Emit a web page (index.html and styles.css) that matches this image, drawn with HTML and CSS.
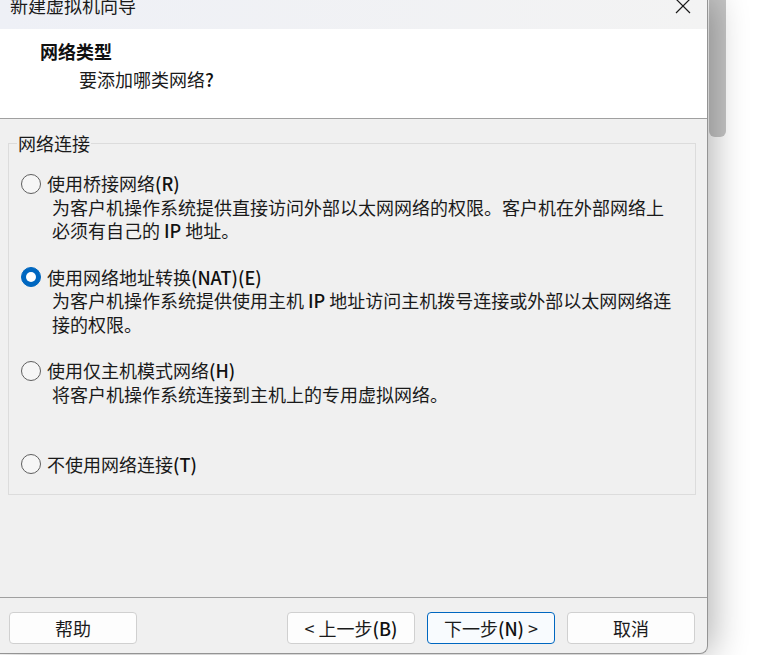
FILE: index.html
```html
<!DOCTYPE html>
<html lang="zh-CN">

<head>
    <meta charset="UTF-8">
    <meta name="viewport" content="width=device-width, initial-scale=1.0">
    <title>新建虚拟机向导</title>
    <link rel="stylesheet" href="styles.css">
</head>

<body>
    <div class="desktop">
        <!-- Wizard window -->
        <div class="window">
            <div class="titlebar">
                <span class="title">新建虚拟机向导</span>
                <svg class="close" viewBox="0 0 16 16" width="16" height="16">
                    <path d="M1 1L15 15M15 1L1 15" stroke="#1a1a1a" stroke-width="1.2" fill="none"></path>
                </svg>
            </div>

            <div class="header">
                <div class="header-title">网络类型</div>
                <div class="header-sub">要添加哪类网络<span class="latin">?</span></div>
            </div>

            <div class="content">
                <fieldset class="group">
                    <legend>网络连接</legend>

                    <div class="option">
                        <div class="option-row"><span class="radio"></span><span>使用桥接网络<span class="latin">(R)</span></span></div>
                        <div class="option-desc">为客户机操作系统提供直接访问外部以太网网络的权限。客户机在外部网络上<br>必须有自己的 <span class="latin">IP</span> 地址。</div>
                    </div>

                    <div class="option">
                        <div class="option-row"><span class="radio checked"></span><span>使用网络地址转换<span class="latin">(NAT)(E)</span></span></div>
                        <div class="option-desc">为客户机操作系统提供使用主机 <span class="latin">IP</span> 地址访问主机拨号连接或外部以太网网络连<br>接的权限。</div>
                    </div>

                    <div class="option">
                        <div class="option-row"><span class="radio"></span><span>使用仅主机模式网络<span class="latin">(H)</span></span></div>
                        <div class="option-desc">将客户机操作系统连接到主机上的专用虚拟网络。</div>
                    </div>

                    <div class="option">
                        <div class="option-row"><span class="radio"></span><span>不使用网络连接<span class="latin">(T)</span></span></div>
                    </div>
                </fieldset>
            </div>

            <div class="footer">
                <button class="btn">帮助</button>
                <div class="nav-buttons">
                    <button class="btn">&lt; 上一步<span class="latin">(B)</span></button>
                    <button class="btn primary">下一步<span class="latin">(N)</span> &gt;</button>
                    <button class="btn">取消</button>
                </div>
            </div>
        </div>

        <!-- Window behind -->
        <div class="backdrop">
            <div class="thumb"></div>
        </div>
    </div>
</body>

</html>
```

FILE: styles.css
```css
body {
    margin: 0;
    padding: 0;
    background-color: white;
    font-family: "Noto Sans CJK SC", "Noto Sans", sans-serif;
    font-size: 18px;
    color: #1a1a1a;
    overflow: hidden;
}

.desktop {
    display: flex;
    width: 757px;
    height: 655px;
}

.window {
    position: relative;
    z-index: 1;
    width: 708px;
    height: 654px;
    box-sizing: border-box;
    display: flex;
    flex-direction: column;
    flex: none;
    background-color: #f0f0f0;
    border-right: 1px solid #949494;
    border-bottom: 1px solid #949494;
    border-bottom-right-radius: 8px;
    box-shadow: 4px 0 36px rgba(0, 0, 0, 0.32);
}

/* latin bits render a touch heavier than the CJK text */
.latin {
    font-weight: 500;
    color: #111;
}

/* Title bar */
.titlebar {
    height: 29px;
    flex: none;
    display: flex;
    align-items: flex-start;
    overflow: hidden;
    background: linear-gradient(90deg, #eef0f6, #f3f3f3);
}

.title {
    margin-left: 10px;
    margin-top: -5px;
    line-height: 20px;
}

.close {
    margin-left: auto;
    margin-right: 16px;
    margin-top: -2px;
}

/* Header */
.header {
    height: 90px;
    flex: none;
    box-sizing: border-box;
    padding: 10px 0 0 40px;
    background-color: white;
    border-bottom: 1px solid #a0a0a0;
}

.header-title {
    font-weight: bold;
    line-height: 24px;
    color: #111;
}

.header-sub {
    margin-top: 4px;
    padding-left: 39px;
    line-height: 24px;
}

/* Group box */
.content {
    flex: 1;
    padding: 13px 0 0 8px;
}

.group {
    width: 688px;
    box-sizing: border-box;
    margin: 0;
    padding: 0 0 18px 0;
    border: 1px solid #dcdcdc;
}

.group legend {
    margin-left: 8px;
    padding: 0 1px;
    line-height: 22px;
}

.option {
    min-height: 93.5px;
}

.option:first-of-type {
    margin-top: 18px;
}

.option:last-child {
    min-height: 0;
}

.option-row {
    display: flex;
    align-items: center;
    line-height: 23.5px;
}

.radio {
    flex: none;
    width: 20px;
    height: 20px;
    box-sizing: border-box;
    margin-left: 12px;
    margin-right: 6px;
    border: 1px solid #5f5f5f;
    border-radius: 50%;
    background-color: #f6f6f6;
    display: grid;
    place-items: center;
}

.radio.checked {
    background-color: #0067c0;
    border-color: #0067c0;
}

.radio.checked::after {
    content: "";
    width: 10px;
    height: 10px;
    border-radius: 50%;
    background-color: white;
}

.option-desc {
    padding-left: 43px;
    line-height: 23.5px;
    white-space: nowrap;
}

/* Footer buttons */
.footer {
    height: 56px;
    flex: none;
    box-sizing: border-box;
    display: flex;
    padding: 14px 12px 0 9px;
    border-top: 1px solid #a0a0a0;
}

.nav-buttons {
    margin-left: auto;
    display: flex;
    gap: 12px;
}

.btn {
    width: 128px;
    height: 32px;
    box-sizing: border-box;
    padding: 0;
    border: 1px solid #d0d0d0;
    border-radius: 4px;
    background-color: #fdfdfd;
    font-family: "Noto Sans CJK SC", "Noto Sans", sans-serif;
    font-size: 18px;
    line-height: 30px;
    color: #1b1b1b;
}

.btn.primary {
    border-color: #0067c0;
    background-color: #f8fbfe;
}

/* Window in the background */
.backdrop {
    flex: 1;
    padding-left: 1px;
}

.thumb {
    width: 17px;
    height: 137px;
    background-color: #c6c6c6;
    border-radius: 0 0 6px 6px;
}
```
